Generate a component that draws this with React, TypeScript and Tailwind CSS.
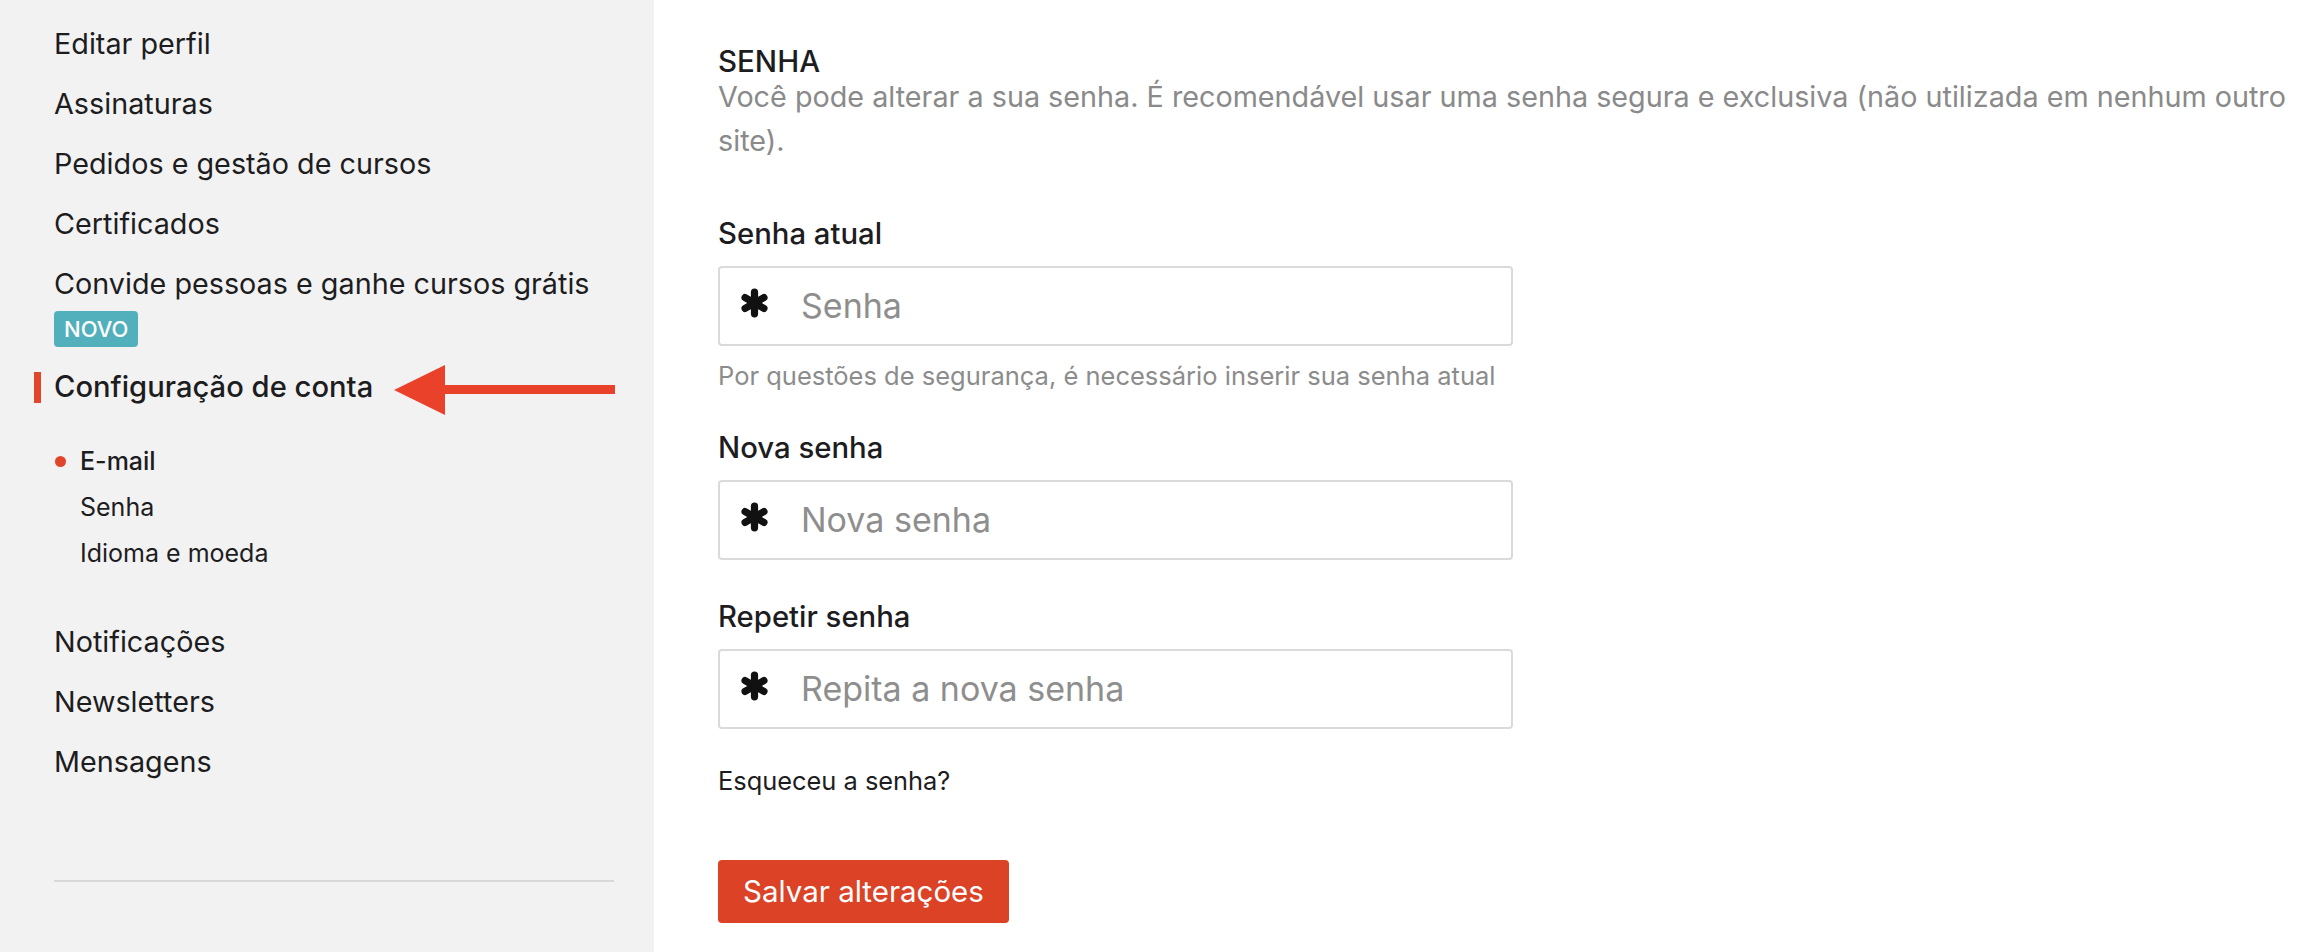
const topItems = ["Editar perfil", "Assinaturas", "Pedidos e gestão de cursos", "Certificados"];
const bottomItems = ["Notificações", "Newsletters", "Mensagens"];

function HeavyAsterisk() {
  return (
    <svg width="29" height="30" viewBox="0 0 28 29" className="mb-[6px] shrink-0">
      <g stroke="#111111" strokeWidth="7" strokeLinecap="round">
        <line x1="14" y1="4" x2="14" y2="25" />
        <line x1="4.9" y1="9.25" x2="23.1" y2="19.75" />
        <line x1="4.9" y1="19.75" x2="23.1" y2="9.25" />
      </g>
    </svg>
  );
}

function PasswordField({ label, placeholder, topGap }: { label: string; placeholder: string; topGap: string }) {
  return (
    <div className={topGap}>
      <label className="block text-[29.3px] leading-[32px] font-medium text-[#1d1d1f]">{label}</label>
      <div className="mt-[16px] flex h-[80px] w-[795px] items-center rounded-[4px] border-2 border-[#dadada] bg-white pl-[20px]">
        <HeavyAsterisk />
        <input
          type="password"
          placeholder={placeholder}
          className="ml-[32px] flex-1 bg-transparent text-[34px] leading-[40px] text-[#1d1d1f] outline-none placeholder:text-[#8e8e8e]"
        />
      </div>
    </div>
  );
}

export default function App() {
  return (
    <div className="flex h-[952px] w-full overflow-hidden font-[family-name:Inter,sans-serif] text-[#1d1d1f]">
      <aside className="relative w-[654px] shrink-0 bg-[#f2f2f2] pl-[54px] pr-[40px] pt-[14px]">
        <ul>
          {topItems.map((t) => (
            <li key={t} className="py-[10px] text-[28.75px] leading-[40px]">
              {t}
            </li>
          ))}
          <li className="py-[10px]">
            <div className="text-[28.75px] leading-[40px]">Convide pessoas e ganhe cursos grátis</div>
            <div className="mt-[7px] flex h-[36px] w-fit items-center rounded-[4px] bg-[#52b0bd] px-[10px] text-[22px] font-medium text-white">
              NOVO
            </div>
          </li>
          <li className="relative py-[10px] text-[29.2px] leading-[40px] font-medium">
            <span className="absolute left-[-20px] top-[15px] h-[31px] w-[7px] bg-[#e1452a]" />
            Configuração de conta
          </li>
        </ul>

        <ul className="mt-[21px] text-[25px] leading-[46px]">
          <li className="flex items-center font-medium">
            <span className="ml-[1px] mr-[14px] h-[11px] w-[11px] rounded-full bg-[#e0452a]" />
            E-mail
          </li>
          <li className="pl-[26px]">Senha</li>
          <li className="pl-[26px]">Idioma e moeda</li>
        </ul>

        <ul className="mt-[36px]">
          {bottomItems.map((t) => (
            <li key={t} className="py-[10px] text-[28.75px] leading-[40px]">
              {t}
            </li>
          ))}
        </ul>

        <div className="mt-[88px] h-[2px] bg-[#d9d9d9]" />

        <svg className="absolute left-[394px] top-[365px]" width="221" height="50" viewBox="0 0 221 50">
          <polygon points="0,25 51,0 51,50" fill="#ea412a" />
          <rect x="50" y="20" width="171" height="9" fill="#ea412a" />
        </svg>
      </aside>

      <main className="flex-1 bg-white pl-[64px] pt-[47px]">
        <h2 className="text-[29.5px] leading-[28px] font-medium text-[#1d1d1f]">SENHA</h2>
        <p className="whitespace-nowrap text-[28.75px] leading-[44px] text-[#8a8a8a]">
          Você pode alterar a sua senha. É recomendável usar uma senha segura e exclusiva (não utilizada em nenhum outro
          <br />
          site).
        </p>

        <PasswordField label="Senha atual" placeholder="Senha" topGap="mt-[55px]" />
        <p className="mt-[15px] text-[25.5px] leading-[30px] text-[#8c8c8c]">
          Por questões de segurança, é necessário inserir sua senha atual
        </p>

        <PasswordField label="Nova senha" placeholder="Nova senha" topGap="mt-[41px]" />
        <PasswordField label="Repetir senha" placeholder="Repita a nova senha" topGap="mt-[41px]" />

        <p className="mt-[34px] text-[25.4px] leading-[36px] text-[#1d1d1f]">Esqueceu a senha?</p>

        <button className="mt-[61px] flex h-[63px] items-center rounded-[4px] bg-[#dc4226] px-[25px] text-[29.5px] text-white">
          Salvar alterações
        </button>
      </main>
    </div>
  );
}
